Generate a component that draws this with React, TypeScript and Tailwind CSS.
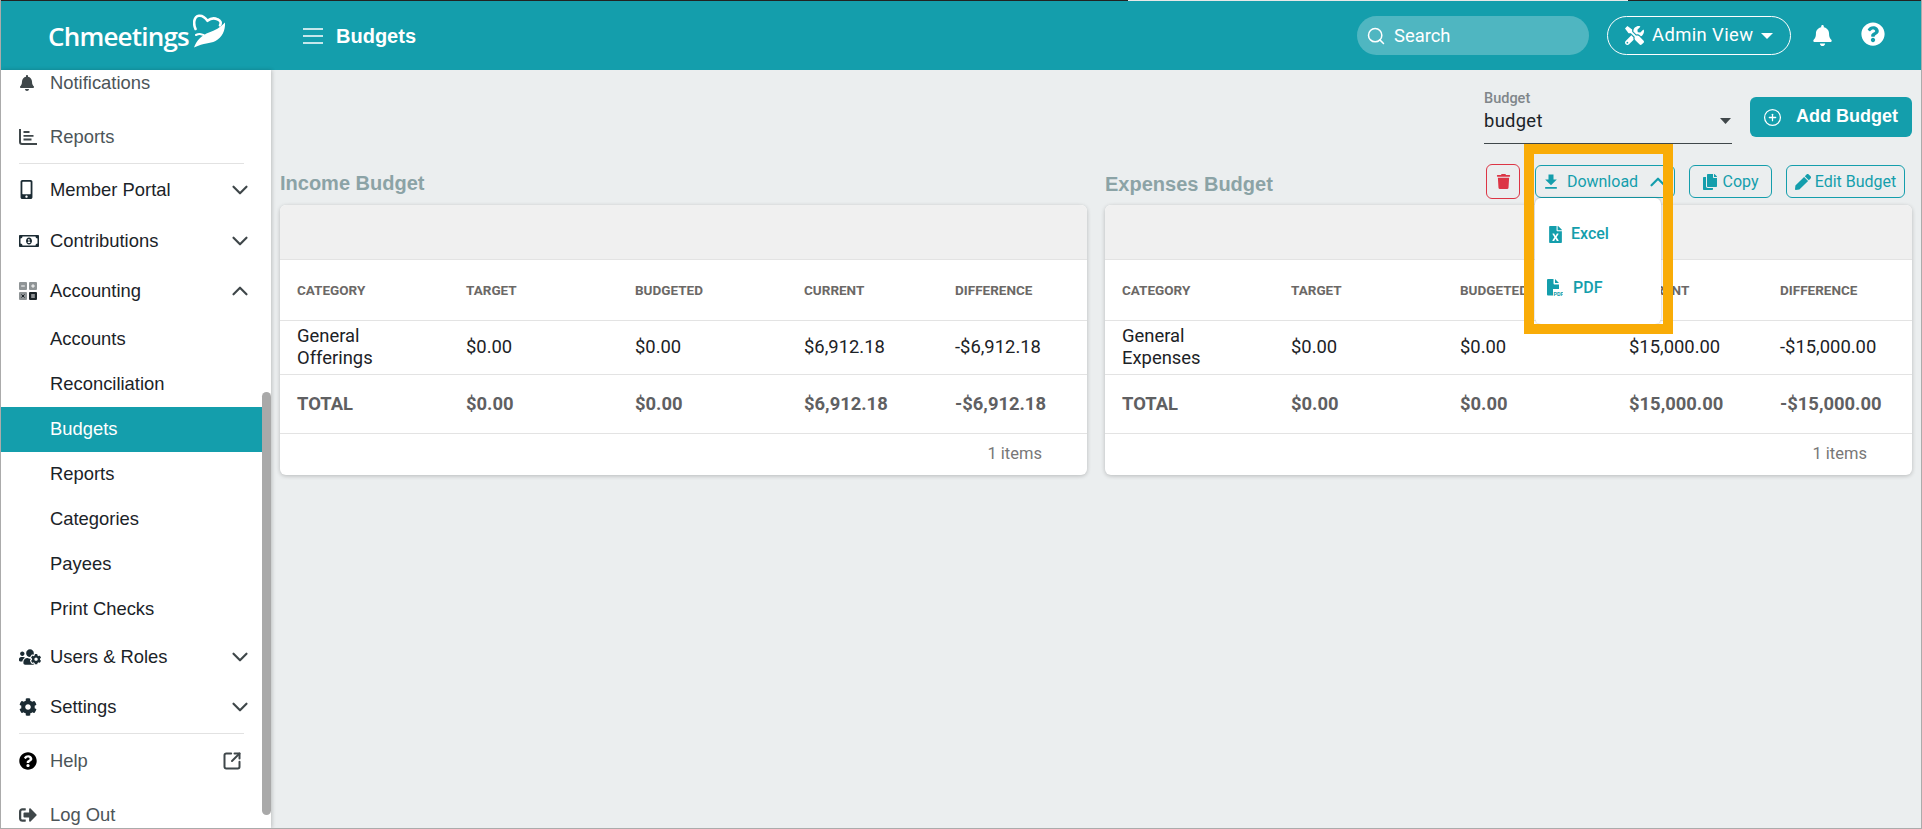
import React from "react";
import { ChevronDown, ChevronUp, Search, CirclePlus, SquareArrowOutUpRight } from "lucide-react";
import { FaBell, FaMobileAlt, FaRegMoneyBillAlt, FaUsersCog, FaCog, FaQuestionCircle, FaSignOutAlt, FaTools, FaTrash, FaCopy, FaPen, FaFileExcel } from "react-icons/fa";
import { MdFileDownload } from "react-icons/md";

const ReportsIcon = () => (
  <svg width="18" height="16" viewBox="0 0 18 16" fill="none" stroke="currentColor" strokeWidth="2">
    <path d="M1 0V13a2 2 0 0 0 2 2H18" />
    <path d="M4.5 3h6M4.5 6.8h10M4.5 10.5h8" strokeWidth="1.8" />
  </svg>
);

const CalcIcon = () => (
  <svg width="18" height="18" viewBox="0 0 18 18">
    <rect x="0" y="0" width="8" height="8" rx="1" fill="#8f9496" />
    <rect x="10" y="0" width="8" height="8" rx="1" fill="#8f9496" />
    <rect x="0" y="10" width="8" height="8" rx="1" fill="#8f9496" />
    <rect x="10" y="10" width="8" height="8" rx="1" fill="#1b2328" />
    <path d="M2.2 4h3.6M12.2 4h3.6M14 2.2v3.6M12.2 13h3.6M12.2 15h3.6" stroke="#fff" strokeWidth="1" />
    <path d="M2.5 12.5l3 3M5.5 12.5l-3 3" stroke="#1b2328" strokeWidth="1" />
  </svg>
);

const PdfIcon = () => (
  <svg width="16" height="18" viewBox="0 0 16 18" fill="#149eac">
    <path d="M0 1a1 1 0 0 1 1-1h5.5v4.5a1 1 0 0 0 1 1H12V10H6v6.5H1a1 1 0 0 1-1-1V1z" />
    <path d="M8 0l4 4H8z" />
    <text x="6.5" y="16.5" fontSize="5.5" fontWeight="700" fontFamily="Roboto, sans-serif">PDF</text>
  </svg>
);

const LogoMark = () => (
  <svg width="33" height="35" viewBox="0 0 33 35" fill="none" stroke="#fff" strokeWidth="2.6" strokeLinecap="round" strokeLinejoin="round">
    <path d="M2.5 15C0 9 1 2.5 6 1.8c3.5-.5 6 1.500 8.500 5 3-2.500 7-3 10-1.500 3 1.300 4 3.500 2.500 6" />
    <path d="M32 8.500c.5 8-3 15-9.500 18.500-6 3-11 1.500-21.500 6.500 2.500-7 8-12.500 15-15 6-2 11-5 16-10z" fill="#fff" stroke="none" />
    <path d="M3 21c3-1.500 7-1 9 1" strokeWidth="2" />
  </svg>
);

const rowBase = "flex items-center pl-[18px] pr-[18px] text-[18.4px] shrink-0 font-['Liberation_Sans',Arial,sans-serif]";

function Row({ icon, label, h, muted, chevron, up, right, lift }: { icon: React.ReactNode; label: string; h: string; muted?: boolean; chevron?: boolean; up?: boolean; right?: React.ReactNode; lift?: boolean }) {
  return (
    <div className={`${rowBase} ${h} ${lift ? "pb-[2px]" : ""} ${muted ? "text-[#4c5558]" : "text-[#1b2328]"}`}>
      <span className={`w-[31px] flex items-center shrink-0 ${muted ? "text-[#3f474a]" : "text-[#1b2b33]"}`}>{icon}</span>
      <span className="flex-1">{label}</span>
      {chevron && (up ? <ChevronUp size={26} strokeWidth={2} className="text-[#3f474a]" /> : <ChevronDown size={26} strokeWidth={2} className="text-[#3f474a]" />)}
      {right}
    </div>
  );
}

function Sub({ label, active }: { label: string; active?: boolean }) {
  return (
    <div className={`h-[45px] shrink-0 flex items-center pl-[49px] pb-[2px] text-[18.4px] font-['Liberation_Sans',Arial,sans-serif] ${active ? "bg-[#149eac] text-white" : "text-[#1b2328]"}`}>{label}</div>
  );
}

function Sidebar() {
  return (
    <aside className="relative w-[270px] shrink-0 bg-white overflow-hidden flex flex-col shadow-[1px_0_4px_rgba(0,0,0,0.2)] z-10">
      <div className="-mt-[14px] flex flex-col">
        <Row h="h-[54px]" muted icon={<FaBell size={16} />} label="Notifications" />
        <Row h="h-[53px]" muted icon={<ReportsIcon />} label="Reports" />
        <div className="h-px shrink-0 bg-[#e2e2e2] ml-[18px] mr-[27px]" />
        <Row h="h-[51px]" chevron icon={<FaMobileAlt size={19} className="-ml-[2px]" />} label="Member Portal" />
        <Row h="h-[51px]" chevron icon={<FaRegMoneyBillAlt size={20} />} label="Contributions" />
        <Row h="h-[51px]" chevron up lift icon={<CalcIcon />} label="Accounting" />
        <Sub label="Accounts" />
        <Sub label="Reconciliation" />
        <Sub label="Budgets" active />
        <Sub label="Reports" />
        <Sub label="Categories" />
        <Sub label="Payees" />
        <Sub label="Print Checks" />
        <Row h="h-[51px]" chevron lift icon={<FaUsersCog size={22} />} label="Users & Roles" />
        <Row h="h-[50px]" chevron lift icon={<FaCog size={18} />} label="Settings" />
        <div className="h-px shrink-0 bg-[#e2e2e2] ml-[18px] mr-[27px]" />
        <Row h="h-[54px]" muted icon={<FaQuestionCircle size={18} className="text-black" />} label="Help" right={<SquareArrowOutUpRight size={20} strokeWidth={2.4} className="mr-[11px] text-[#3f474a]" />} />
        <Row h="h-[54px]" muted icon={<FaSignOutAlt size={18} />} label="Log Out" />
      </div>
      <div className="absolute right-0 top-[322px] bottom-[13px] w-[9px] rounded-[5px] bg-[#a9a9a9]" />
    </aside>
  );
}

function Header() {
  return (
    <header className="h-[69px] shrink-0 bg-[#149eac] flex items-center text-white pr-[36px]">
      <div className="w-[302px] shrink-0 pl-[47px] flex items-center">
        <span className="text-[26px] leading-none font-semibold tracking-[-0.8px] font-['Open_Sans',sans-serif]">Chmeetings</span>
        <span className="ml-[4px] -mt-[8px]"><LogoMark /></span>
      </div>
      <svg width="20" height="16" viewBox="0 0 20 16" stroke="#fff" strokeWidth="1.6" className="shrink-0">
        <path d="M0 1h20M0 8h20M0 15h20" />
      </svg>
      <span className="ml-[13px] text-[20px] font-bold font-['Liberation_Sans',Arial,sans-serif]">Budgets</span>
      <div className="flex-1" />
      <div className="w-[232px] h-[39px] rounded-full bg-white/25 flex items-center pl-[9px] mr-[18px] text-[18.4px]">
        <Search size={20} strokeWidth={1.8} className="mr-[8px]" />
        <span>Search</span>
      </div>
      <div className="w-[184px] h-[39px] rounded-full border border-white flex items-center pl-[17px] text-[18.4px]">
        <FaTools size={19} className="mr-[8px]" />
        <span className="tracking-[0.4px] -mt-[2px]">Admin View</span>
        <svg width="12" height="6" viewBox="0 0 12 6" fill="#fff" className="ml-[8px]"><path d="M0 0h12L6 6z" /></svg>
      </div>
      <FaBell size={21} className="ml-[21px]" />
      <FaQuestionCircle size={24} className="ml-[28px] -mt-[4px]" />
    </header>
  );
}

function OutlineBtn({ w, icon, label, children }: { w: string; icon: React.ReactNode; label: string; children?: React.ReactNode }) {
  return (
    <div className={`${w} h-[33px] rounded-[6px] border border-[#149eac] text-[#149eac] text-[16px] flex items-center justify-center`}>
      {icon}
      <span>{label}</span>
      {children}
    </div>
  );
}

const td = "align-middle pl-[17px]";

function Panel({ rows, current, diff, totalCur, totalDiff, items }: { rows: string[]; current: string; diff: string; totalCur: string; totalDiff: string; items: string }) {
  const cols = ["w-[169px]", "w-[169px]", "w-[169px]", "w-[151px]", ""];
  return (
    <div className="h-[270px] rounded-[6px] bg-white shadow-[0_1px_4px_rgba(0,0,0,0.22)] overflow-hidden flex flex-col">
      <div className="h-[55px] shrink-0 bg-[#f0f0f0] border-b border-[#e3e3e3]" />
      <table className="w-full table-fixed border-collapse">
        <thead>
          <tr className="h-[60px] border-b border-[#e3e3e3] text-[13.5px] font-bold text-[#6b6866]">
            {["CATEGORY", "TARGET", "BUDGETED", "CURRENT", "DIFFERENCE"].map((h, i) => (
              <th key={h} className={`${cols[i]} ${td} text-left font-bold`}>{h}</th>
            ))}
          </tr>
        </thead>
        <tbody>
          <tr className="h-[54px] border-b border-[#e3e3e3] text-[18.4px] leading-[22px] text-[#1c2226]">
            <td className={td}>{rows[0]}<br />{rows[1]}</td>
            <td className={td}>$0.00</td>
            <td className={td}>$0.00</td>
            <td className={td}>{current}</td>
            <td className={td}>{diff}</td>
          </tr>
          <tr className="h-[59px] border-b border-[#e3e3e3] text-[18.4px] font-bold text-[#5f6062]">
            <td className={td}>TOTAL</td>
            <td className={td}>$0.00</td>
            <td className={td}>$0.00</td>
            <td className={td}>{totalCur}</td>
            <td className={td}>{totalDiff}</td>
          </tr>
        </tbody>
      </table>
      <div className="flex-1 flex items-center justify-end pr-[45px] text-[16.5px] text-[#777777]">{items}</div>
    </div>
  );
}

export default function App() {
  return (
    <div className="relative w-[1922px] h-[829px] overflow-hidden bg-[#ebeeef] flex flex-col border-l border-r border-b border-[#ababab] font-['Roboto',sans-serif]">
      <div className="h-px shrink-0 flex -mx-px">
        <div className="w-[1128px] bg-[#222222]" />
        <div className="w-[500px] bg-[#e8e8e8]" />
        <div className="flex-1 bg-[#222222]" />
      </div>
      <Header />
      <div className="flex-1 flex min-h-0">
        <Sidebar />
        <main className="flex-1 min-w-0 pl-[9px] pr-[9px]">
          <div className="flex justify-end pt-[27px] h-[67px]">
            <div className="w-[248px] h-[47px] border-b border-[#3f474a] mr-[18px] relative">
              <div className="-mt-[6px] text-[14.5px] leading-[16px] font-medium text-[#80868a]">Budget</div>
              <div className="mt-[1px] text-[18.4px] leading-[26px] text-[#1b2328] tracking-[0.3px]">budget</div>
              <svg width="11" height="6" viewBox="0 0 11 6" fill="#3f474a" className="absolute right-[1px] top-[21px]"><path d="M0 0h11L5.500 6z" /></svg>
            </div>
            <div className="w-[162px] h-[40px] rounded-[6px] bg-[#149eac] text-white flex items-center pl-[13px]">
              <CirclePlus size={19} strokeWidth={1.6} />
              <span className="ml-[14px] -mt-[2px] text-[18px] font-bold font-['Liberation_Sans',Arial,sans-serif]">Add Budget</span>
            </div>
          </div>
          <div className="grid grid-cols-2 gap-[18px]">
            <div>
              <div className="h-[68px] flex items-end">
                <h2 className="mb-[9px] text-[20px] leading-[26px] font-bold text-[#8ba3a6] font-['Liberation_Sans',Arial,sans-serif]">Income Budget</h2>
              </div>
              <Panel rows={["General", "Offerings"]} current="$6,912.18" diff="-$6,912.18" totalCur="$6,912.18" totalDiff="-$6,912.18" items="1 items" />
            </div>
            <div>
              <div className="h-[68px] flex items-end justify-between pb-[6px] pr-[7px]">
                <h2 className="mb-[2px] text-[20px] leading-[26px] font-bold text-[#8ba3a6] font-['Liberation_Sans',Arial,sans-serif]">Expenses Budget</h2>
                <div className="flex items-center gap-[14px]">
                  <div className="w-[34px] h-[35px] rounded-[6px] border border-[#dc3545] text-[#dc3545] flex items-center justify-center mr-px">
                    <FaTrash size={15} />
                  </div>
                  <OutlineBtn w="w-[140px]" icon={<MdFileDownload size={20} className="mr-[6px] -ml-[3px]" />} label="Download">
                    <ChevronUp size={26} strokeWidth={2} className="ml-[7px] -mr-[5px]" />
                  </OutlineBtn>
                  <OutlineBtn w="w-[83px]" icon={<FaCopy size={16} className="mr-[4px]" />} label="Copy" />
                  <OutlineBtn w="w-[119px]" icon={<FaPen size={16} className="mr-[4px]" />} label="Edit Budget" />
                </div>
              </div>
              <Panel rows={["General", "Expenses"]} current="$15,000.00" diff="-$15,000.00" totalCur="$15,000.00" totalDiff="-$15,000.00" items="1 items" />
            </div>
          </div>
        </main>
      </div>
      <div className="absolute left-[1534px] top-[198px] w-[126px] h-[126px] rounded-[6px] bg-white shadow-[0_0_3px_rgba(0,0,0,0.25)] z-20 flex flex-col text-[#149eac] text-[16px] font-medium pt-[9px] pl-[12px]">
        <div className="h-[54px] flex items-center">
          <FaFileExcel size={17} className="mr-[7px]" />
          <span>Excel</span>
        </div>
        <div className="h-[54px] flex items-center">
          <PdfIcon />
          <span className="ml-[10px]">PDF</span>
        </div>
      </div>
      <div className="absolute left-[1523px] top-[144px] w-[149px] h-[190px] border-[10px] border-[#f9ac07] z-30" />
    </div>
  );
}
